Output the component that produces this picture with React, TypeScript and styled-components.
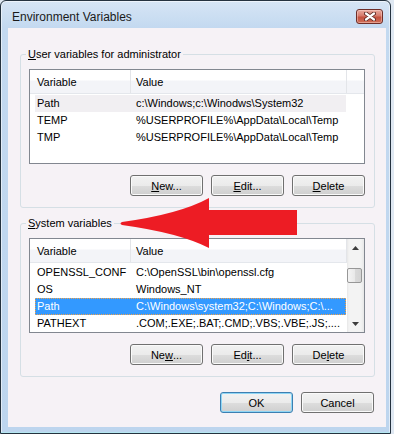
import styled, { createGlobalStyle } from "styled-components";

const GlobalStyle = createGlobalStyle`
  html, body {
    margin: 0;
    padding: 0;
  }
  body {
    background: #dfe8f2;
    font-family: "Liberation Sans", Arial, sans-serif;
    font-size: 11px;
    color: #000;
  }
`;

type VarRow = {
  name: string;
  value: string;
  state?: "hover" | "selected";
};

const userVars: VarRow[] = [
  { name: "Path", value: "c:\\Windows;c:\\Winodws\\System32", state: "hover" },
  { name: "TEMP", value: "%USERPROFILE%\\AppData\\Local\\Temp" },
  { name: "TMP", value: "%USERPROFILE%\\AppData\\Local\\Temp" },
];

const systemVars: VarRow[] = [
  { name: "OPENSSL_CONF", value: "C:\\OpenSSL\\bin\\openssl.cfg" },
  { name: "OS", value: "Windows_NT" },
  {
    name: "Path",
    value: "C:\\Windows\\system32;C:\\Windows;C:\\...",
    state: "selected",
  },
  { name: "PATHEXT", value: ".COM;.EXE;.BAT;.CMD;.VBS;.VBE;.JS;...." },
];

const VarList = ({ rows, scroll }: { rows: VarRow[]; scroll?: boolean }) => (
  <ListBox>
    <ListBody>
      <HeaderRow>
        <HeaderCell $w={101} $pad={7}>
          Variable
        </HeaderCell>
        <HeaderCell $w={216} $pad={5}>
          Value
        </HeaderCell>
      </HeaderRow>
      <Rows>
        {rows.map((r) => (
          <ItemRow key={r.name + r.value} $state={r.state}>
            <Cell $pad={2}>{r.name}</Cell>
            <Cell $pad={5}>{r.value}</Cell>
          </ItemRow>
        ))}
      </Rows>
    </ListBody>
    {scroll && (
      <ScrollBar>
        <ScrollArrow>
          <svg width="7" height="4" viewBox="0 0 7 4">
            <polygon points="3.5,0 7,4 0,4" fill="#3c3c3c" />
          </svg>
        </ScrollArrow>
        <ScrollTrack>
          <ScrollThumb />
        </ScrollTrack>
        <ScrollArrow>
          <svg width="7" height="4" viewBox="0 0 7 4">
            <polygon points="0,0 7,0 3.5,4" fill="#3c3c3c" />
          </svg>
        </ScrollArrow>
      </ScrollBar>
    )}
  </ListBox>
);

const App = () => {
  return (
    <>
      <GlobalStyle />
      <Window>
        <TitleBar>
          <Title>Environment Variables</Title>
          <CloseButton>
            <svg width="12" height="9" viewBox="0 0 12 9">
              <path
                d="M2 1.5 L10 7.5 M10 1.5 L2 7.5"
                stroke="#5b2620"
                strokeWidth="4"
                strokeLinecap="round"
              />
              <path
                d="M2 1.5 L10 7.5 M10 1.5 L2 7.5"
                stroke="#fff"
                strokeWidth="2.2"
                strokeLinecap="round"
              />
            </svg>
          </CloseButton>
        </TitleBar>
        <Client>
          <GroupBox $top={20}>
            <Legend>
              <Key>U</Key>ser variables for administrator
            </Legend>
            <VarList rows={userVars} />
            <ButtonRow>
              <Button>
                <Key>N</Key>ew...
              </Button>
              <Button>
                <Key>E</Key>dit...
              </Button>
              <Button>
                <Key>D</Key>elete
              </Button>
            </ButtonRow>
          </GroupBox>
          <GroupBox $top={9}>
            <Legend>
              <Key>S</Key>ystem variables
            </Legend>
            <VarList rows={systemVars} scroll />
            <ButtonRow>
              <Button>
                Ne<Key>w</Key>...
              </Button>
              <Button>
                Ed<Key>i</Key>t...
              </Button>
              <Button>
                De<Key>l</Key>ete
              </Button>
            </ButtonRow>
          </GroupBox>
          <DialogButtons>
            <Button $default>OK</Button>
            <Button>Cancel</Button>
          </DialogButtons>
        </Client>
        <RedArrow width="180" height="54" viewBox="119 196 180 54">
          <path
            d="M297 210 L209 210 L209 198 Q180 214 122 222 Q119 223.5 122 225 Q180 233 209 248 L209 235 L297 235 Z"
            fill="#ed1c24"
          />
        </RedArrow>
      </Window>
    </>
  );
};

export default App;

const Window = styled.div`
  position: relative;
  width: 391px;
  height: 434px;
  box-sizing: border-box;
  display: flex;
  flex-direction: column;
  padding: 0 4px 6px 7px;
  border: 1px solid #24323f;
  border-radius: 6px 6px 0 0;
  background: linear-gradient(#d6e5f5 0, #c3d9f0 27px, #bdd5ee 100%);
  box-shadow: inset 0 0 0 1px rgba(255, 255, 255, 0.55),
    inset 0 -1px 0 #5ccbdf;
`;

const TitleBar = styled.div`
  height: 27px;
  box-sizing: border-box;
  display: flex;
  align-items: center;
  justify-content: space-between;
  padding: 4px 3px 0 4px;
`;

const Title = styled.div`
  font-family: "Liberation Sans", Arial, sans-serif;
  font-size: 12px;
  color: #1a1a1a;
`;

const CloseButton = styled.div`
  width: 27px;
  height: 15px;
  box-sizing: border-box;
  display: flex;
  align-items: center;
  justify-content: center;
  border: 1px solid #6e2e28;
  border-radius: 3px;
  background: linear-gradient(#e9aa9f 0, #d67a6b 45%, #c4513f 55%, #cf6f58 100%);
  box-shadow: inset 0 0 0 1px rgba(255, 220, 210, 0.45);
`;

const Client = styled.div`
  flex: 1;
  display: flex;
  flex-direction: column;
  background: #f6f2f6;
`;

const GroupBox = styled.fieldset<{ $top: number }>`
  margin: ${(p) => p.$top}px 11px 0 12px;
  padding: 9px 9px 11px 8px;
  min-width: 0;
  border: 1px solid #d5dfe5;
  border-radius: 3px;
`;

const Legend = styled.legend`
  margin-left: -3px;
  padding: 0 2px;
  line-height: 12px;
`;

const Key = styled.span`
  text-decoration: underline;
`;

const ListBox = styled.div`
  height: 95px;
  box-sizing: border-box;
  display: flex;
  border: 1px solid #828790;
  background: #fff;
  overflow: hidden;
`;

const ListBody = styled.div`
  flex: 1;
  min-width: 0;
  display: flex;
  flex-direction: column;
`;

const HeaderRow = styled.div`
  display: flex;
  height: 23px;
  flex: none;
  border-bottom: 1px solid #e4e7ec;
  background: linear-gradient(#ffffff 0, #ffffff 10px, #f3f4f8 11px, #f3f4f8 100%);
`;

const HeaderCell = styled.div<{ $w: number; $pad: number }>`
  width: ${(p) => p.$w}px;
  flex: none;
  box-sizing: border-box;
  padding-left: ${(p) => p.$pad}px;
  border-right: 1px solid #e3e5e9;
  line-height: 24px;
`;

const Rows = styled.div`
  padding: 1px 0 0 5px;
`;

const ItemRow = styled.div<{ $state?: "hover" | "selected" }>`
  display: grid;
  grid-template-columns: 96px 215px;
  width: 311px;
  height: 17px;
  line-height: 17px;
  background: ${(p) =>
    p.$state === "selected"
      ? "#3399ff"
      : p.$state === "hover"
      ? "#f1eff2"
      : "transparent"};
  color: ${(p) => (p.$state === "selected" ? "#fff" : "#000")};
  outline: ${(p) => (p.$state === "selected" ? "1px dotted #f0a24a" : "none")};
  outline-offset: -1px;
`;

const Cell = styled.div<{ $pad: number }>`
  padding-left: ${(p) => p.$pad}px;
  white-space: nowrap;
  overflow: hidden;
`;

const ScrollBar = styled.div`
  width: 17px;
  flex: none;
  display: flex;
  flex-direction: column;
  background: linear-gradient(
    to right,
    #e7e7e7 0,
    #f3f3f3 2px,
    #f3f3f3 14px,
    #e7e7e7 100%
  );
`;

const ScrollArrow = styled.div`
  height: 17px;
  flex: none;
  display: flex;
  align-items: center;
  justify-content: center;
`;

const ScrollTrack = styled.div`
  flex: 1;
`;

const ScrollThumb = styled.div`
  margin-top: 12px;
  width: 15px;
  height: 15px;
  box-sizing: border-box;
  border: 1px solid #979797;
  border-radius: 2px;
  background: linear-gradient(
    to right,
    #f4f4f4 0,
    #e9e9e9 50%,
    #dadada 51%,
    #d3d3d3 100%
  );
`;

const ButtonRow = styled.div`
  display: flex;
  justify-content: flex-end;
  gap: 8px;
  margin-top: 11px;
`;

const DialogButtons = styled.div`
  display: flex;
  justify-content: flex-end;
  gap: 8px;
  margin-top: 15px;
  padding-right: 12px;
`;

const Button = styled.div<{ $default?: boolean }>`
  width: 73px;
  height: 21px;
  box-sizing: border-box;
  display: flex;
  align-items: center;
  justify-content: center;
  border: 1px solid ${(p) => (p.$default ? "#3c7fb1" : "#707070")};
  border-radius: 3px;
  background: linear-gradient(#f2f2f2 0, #ebebeb 50%, #dddddd 51%, #cfcfcf 100%);
  box-shadow: inset 0 0 0 1px ${(p) => (p.$default ? "#8fd6f5" : "#fafafa")};
  font-size: 11px;
`;

const RedArrow = styled.svg`
  position: absolute;
  left: 118px;
  top: 195px;
  pointer-events: none;
`;
